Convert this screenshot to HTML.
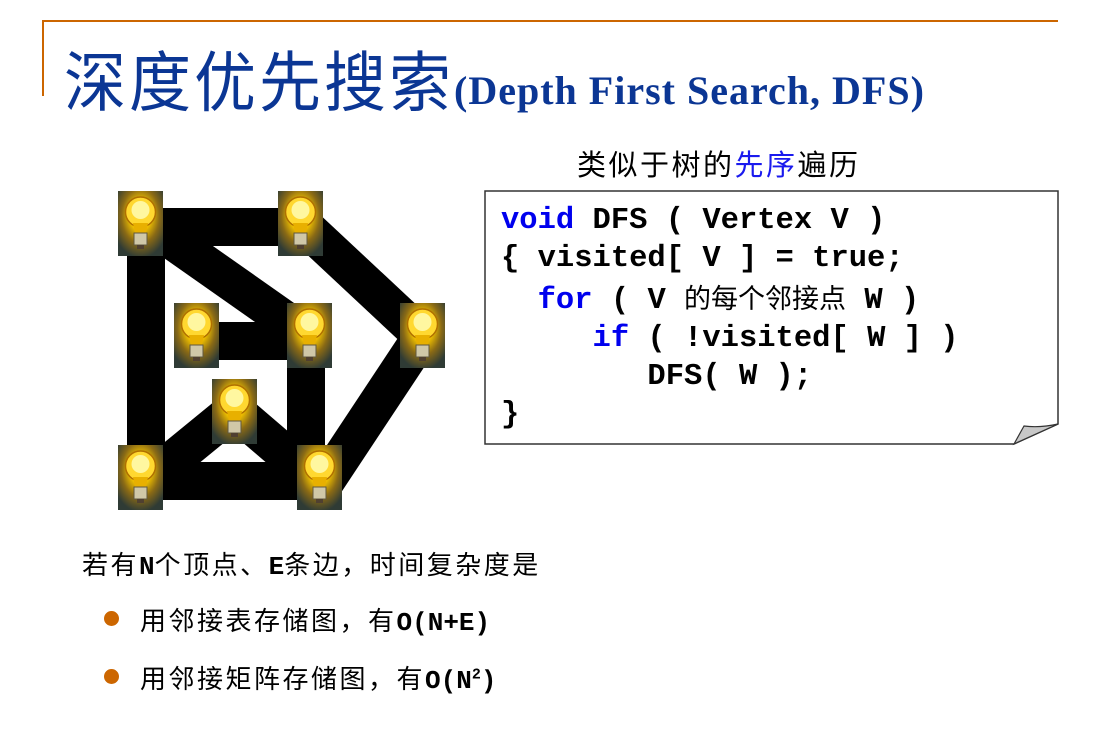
<!DOCTYPE html>
<html><head><meta charset="utf-8"><style>
html,body{margin:0;padding:0;background:#fff;}
body{width:1100px;height:734px;position:relative;overflow:hidden;font-family:"Liberation Sans","Noto Sans CJK SC",sans-serif;}
.hl{position:absolute;left:42px;top:20px;width:1016px;height:2px;background:#cc6600;}
.vl{position:absolute;left:42px;top:20px;width:2px;height:76px;background:#cc6600;}
.title{position:absolute;left:64px;top:32px;white-space:nowrap;color:#0b3694;}
.title .cn{font-family:"Noto Sans CJK SC",sans-serif;font-size:62px;letter-spacing:3px;display:inline-block;transform:scaleY(1.05);}
.title .en{font-family:"Liberation Serif",serif;font-weight:bold;font-size:40px;letter-spacing:1px;}
.sub{position:absolute;left:577px;top:142px;font-family:"Noto Sans CJK SC",sans-serif;font-size:29px;letter-spacing:2.5px;color:#000;white-space:nowrap;}
.code{position:absolute;left:501px;top:202px;font-family:"Liberation Mono","Noto Sans CJK SC",monospace;font-weight:bold;font-size:30.5px;line-height:38px;white-space:pre;color:#000;}
.code .k{color:#0000ee;}
.code .c{font-weight:normal;font-family:"Noto Sans CJK SC",sans-serif;font-size:27px;}
.t{position:absolute;font-family:"Liberation Serif","Noto Sans CJK SC",sans-serif;font-size:26px;letter-spacing:2.5px;white-space:nowrap;color:#000;}
.t b{font-family:"Liberation Mono",monospace;letter-spacing:0;}
.dot{position:absolute;width:15px;height:15px;border-radius:50%;background:#cc6600;}
</style></head><body>
<div class="hl"></div><div class="vl"></div>
<div class="title"><span class="cn">深度优先搜索</span><span class="en">(Depth First Search, DFS)</span></div>
<div class="sub">类似于树的<span style="color:#1a1aee">先序</span>遍历</div>

<svg style="position:absolute;left:0;top:0" width="1100" height="734">
<defs>
<radialGradient id="g" cx="50%" cy="38%" r="65%">
<stop offset="0" stop-color="#fff6a0"/><stop offset="0.35" stop-color="#f0c000"/><stop offset="0.65" stop-color="#8a6a15"/><stop offset="1" stop-color="#2f3b35"/>
</radialGradient>
<g id="b">
<rect x="0" y="0" width="45" height="65" fill="url(#g)"/>
<circle cx="22.5" cy="21" r="15" fill="#ffd830" stroke="#b07000" stroke-width="1.5"/>
<circle cx="22.5" cy="19" r="9" fill="#fff7a0"/>
<path d="M15 32 L30 32 L28 42 L17 42 Z" fill="#e8b000"/>
<rect x="16" y="42" width="13" height="12" fill="#d0c8a8" stroke="#605840" stroke-width="1"/>
<rect x="19" y="54" width="7" height="4" fill="#504030"/>
</g>
</defs>
<g stroke="#000" stroke-width="38" fill="none" stroke-linecap="butt">
<line x1="140" y1="227" x2="300" y2="227"/>
<line x1="146" y1="225" x2="146" y2="477"/>
<line x1="150" y1="225" x2="308" y2="336"/>
<line x1="196" y1="341" x2="308" y2="341"/>
<line x1="306" y1="336" x2="306" y2="477"/>
<line x1="300" y1="222" x2="422" y2="336"/>
<line x1="422" y1="336" x2="320" y2="490"/>
<line x1="140" y1="481" x2="320" y2="481"/>
<line x1="146" y1="482" x2="234" y2="410"/>
<line x1="234" y1="410" x2="318" y2="482"/>
</g>
<use href="#b" x="118" y="191"/>
<use href="#b" x="278" y="191"/>
<use href="#b" x="174" y="303"/>
<use href="#b" x="287" y="303"/>
<use href="#b" x="400" y="303"/>
<use href="#b" x="212" y="379"/>
<use href="#b" x="118" y="445"/>
<use href="#b" x="297" y="445"/>
<path d="M485 191 H1058 V424 L1014 444 H485 Z" fill="#fff" stroke="#333" stroke-width="1.5"/>
<path d="M1014 444 L1024 426 Q1040 428 1058 424 Z" fill="#c8c8c8" stroke="#333" stroke-width="1.2"/>
</svg>

<div class="code"><span class="k">void</span> DFS ( Vertex V )
{ visited[ V ] = true;
  <span class="k">for</span> ( V <span class="c">的每个邻接点</span> W )
     <span class="k">if</span> ( !visited[ W ] )
        DFS( W );
}</div>

<div class="t" style="left:82px;top:545px;">若有<b>N</b>个顶点、<b>E</b>条边，时间复杂度是</div>
<div class="dot" style="left:104px;top:611px;"></div>
<div class="t" style="left:140px;top:601px;">用邻接表存储图，有<b>O(N+E)</b></div>
<div class="dot" style="left:104px;top:669px;"></div>
<div class="t" style="left:140px;top:659px;">用邻接矩阵存储图，有<b>O(N<sup style="font-size:15px">2</sup>)</b></div>
</body></html>
